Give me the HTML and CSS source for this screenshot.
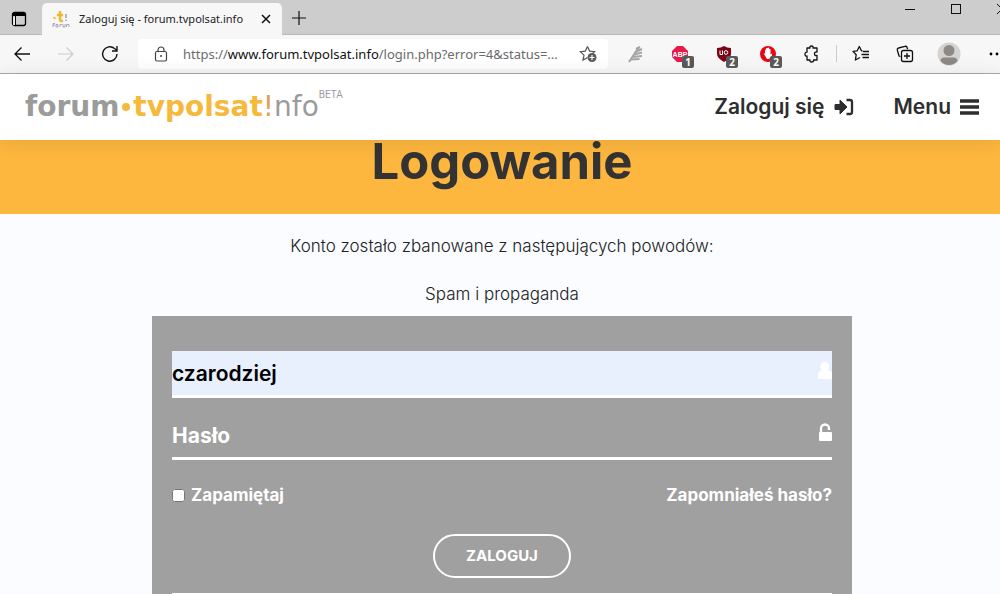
FILE: index.html
```html
<!DOCTYPE html>
<html lang="pl">
<head>
<meta charset="utf-8">
<title>Zaloguj się - forum.tvpolsat.info</title>
<link rel="stylesheet" href="styles.css">
</head>
<body>
<div class="tabstrip">
  <button class="tab-actions" aria-label="Karty"><svg width="16" height="16" viewBox="0 0 16 16"><rect x="1.500" y="1.500" width="13" height="13" rx="2" fill="none" stroke="#000" stroke-width="1.300"/><path d="M1 2h14v3H1z" fill="#000"/><path d="M4.500 4v10" stroke="#000"/><path d="M2.200 6h1.800v8H2.200z" fill="#f2f2f2"/></svg></button>
  <div class="tab">
    <svg class="favicon" width="18" height="18" viewBox="0 0 18 18"><circle cx="2.500" cy="8" r="1.300" fill="#f2c14a"/><path d="M8 1v8.500q0 2 3 1.500M5 5h6" fill="none" stroke="#f5b62c" stroke-width="2.500"/><path d="M14 4v4M14 9.500v1.500" stroke="#a2a0aa" stroke-width="1.500"/><path d="M1 17v-3.500h2M1 15h2M4 14.500h2V17H4zM8 17v-2.500h2M11 14v3h2v-3M14.500 17v-2.500H17V17" fill="none" stroke="#a9a7b6"/></svg>
    <span class="tab-title">Zaloguj się - forum.tvpolsat.info</span>
    <button class="tab-close" aria-label="Zamknij kartę"><svg width="10" height="10" viewBox="0 0 10 10"><path d="M1 1l8 8M9 1L1 9" stroke="#111" stroke-width="1.500"/></svg></button>
  </div>
  <button class="new-tab" aria-label="Nowa karta"><svg width="16" height="16" viewBox="0 0 16 16"><path d="M8 1v14M1 8h14" stroke="#111" stroke-width="1.200"/></svg></button>
  <div class="window-controls">
    <button aria-label="Minimalizuj"><svg width="12" height="12" viewBox="0 0 12 12"><path d="M1 6.500h10" stroke="#111"/></svg></button>
    <button aria-label="Maksymalizuj"><svg width="12" height="12" viewBox="0 0 12 12"><rect x="1.500" y="1.500" width="9" height="9" fill="none" stroke="#111"/></svg></button>
    <button class="window-close" aria-label="Zamknij"><svg width="12" height="12" viewBox="0 0 12 12"><path d="M1 1l10 10M11 1L1 11" stroke="#111"/></svg></button>
  </div>
</div>
<div class="toolbar">
  <button class="nav-button" aria-label="Wstecz"><svg width="18" height="16" viewBox="0 0 18 16"><path d="M17 8H2M8.500 1.500L2 8l6.500 6.500" fill="none" stroke="#111" stroke-width="1.300"/></svg></button>
  <button class="nav-button" aria-label="Dalej"><svg width="18" height="16" viewBox="0 0 18 16"><path d="M1 8h15M9.500 1.500L16 8l-6.500 6.500" fill="none" stroke="#ccc" stroke-width="1.200"/></svg></button>
  <button class="nav-button" aria-label="Odśwież"><svg width="18" height="18" viewBox="0 0 18 18"><path d="M16 9a7.200 7.200 0 1 1-2.500-5.500L15.500 5M16 1v5h-5" fill="none" stroke="#111" stroke-width="1.400"/></svg></button>
  <div class="address">
    <svg width="14" height="16" viewBox="0 0 14 16"><rect x="1.500" y="5.500" width="11" height="9.500" rx="1.500" fill="none" stroke="#444" stroke-width="1.200"/><path d="M4 5.500V4a3 3 0 0 1 6 0v1.500" fill="none" stroke="#444" stroke-width="1.200"/><circle cx="7" cy="10" r="1" fill="#444"/></svg>
    <span class="url">https://<b>www.forum.tvpolsat.info</b>/login.php?error=4&amp;status=...</span>
    <button class="favorite" aria-label="Dodaj do ulubionych"><svg width="18" height="18" viewBox="0 0 18 18"><path d="M8.500 1.500l2.100 4.600 5 .6-3.700 3.400M8.500 1.500L6.300 6.100l-5 .6 3.700 3.400-1 5 4.300-2.400" fill="none" stroke="#555" stroke-width="1.200"/><circle cx="13" cy="12.500" r="4.500" fill="#5b5b5b"/><path d="M13 10v5M10.500 12.500h5" stroke="#fff" stroke-width="1.200"/></svg></button>
  </div>
  <div class="tools">
    <button class="tool" aria-label="Rozszerzenie"><svg width="18" height="18" viewBox="0 0 18 18"><path d="M2 17L12 2" stroke="#a5a5a5" stroke-width="2"/><path d="M9 4l4-2M8 7l7-3M7 9.500l8-2M5 12l10-1M3.500 14.500l9-.5" stroke="#a5a5a5" stroke-width="2"/></svg></button>
    <button class="tool" aria-label="AdBlock Plus"><svg width="16" height="16" viewBox="0 0 16 16"><path d="M5 0h6l5 5v6l-5 5H5l-5-5V5z" fill="#e41b4b"/><text x="8" y="11" class="abp-text">ABP</text></svg><span class="badge">1</span></button>
    <button class="tool" aria-label="uBlock"><svg width="16" height="16" viewBox="0 0 16 16"><path d="M8 0q3 2 7 2v6q0 4-7 8-7-4-7-8V2q4 0 7-2z" fill="#7b0615"/><path d="M4 4.500v4h2.500v-4" fill="none" stroke="#fff"/><circle cx="10" cy="6.500" r="1.800" fill="none" stroke="#fff"/></svg><span class="badge">2</span></button>
    <button class="tool" aria-label="Blokada reklam"><svg width="18" height="18" viewBox="0 0 18 18"><circle cx="9" cy="9" r="8" fill="#e90612"/><path d="M5 9l1-1V5q1-1 1 0V3.500q1-1 1.500 0V3q1-1 1.500 0v1q1-.5 1.500.5v5l1.500-1v2l-3 3.500H8z" fill="#fff"/></svg><span class="badge">2</span></button>
    <button class="tool" aria-label="Rozszerzenia"><svg width="16" height="18" viewBox="0 0 16 18"><path d="M3 3h3q-.5-2 1.500-2T9 3h4v4q-2.500-.5-2.500 1.800T13 10.500V15H9.500q.3 2-1.800 2T6 15H3v-4q-2 .3-2-1.800T3 7.200z" fill="none" stroke="#111" stroke-width="1.300" stroke-linejoin="round"/></svg></button>
    <span class="separator"></span>
    <button class="tool" aria-label="Ulubione"><svg width="18" height="18" viewBox="0 0 18 18"><path d="M10.500 6L9.500 5.800 7.300 1.500 5.200 5.800l-4.200.6 3.200 3.300-.8 5.300L8 12.500M11 6.500h6M9.500 9.500H17M10.500 12.500H17" fill="none" stroke="#111" stroke-width="1.300" stroke-linejoin="round"/></svg></button>
    <button class="tool" aria-label="Kolekcje"><svg width="18" height="18" viewBox="0 0 18 18"><path d="M4.500 11.500L3 11 1.300 5q-.3-1.700 1.200-2l6.500-1.700q1.500-.3 2 1l.6 2" fill="none" stroke="#111" stroke-width="1.300"/><rect x="5.500" y="5.500" width="11" height="11" rx="2" fill="none" stroke="#111" stroke-width="1.300"/><path d="M11 8v6M8 11h6" stroke="#111" stroke-width="1.300"/></svg></button>
    <button class="tool" aria-label="Profil"><svg width="24" height="24" viewBox="0 0 24 24"><circle cx="12" cy="12" r="11.500" fill="#d5d3d1"/><circle cx="12" cy="8.500" r="5.500" fill="#8f8986"/><path d="M3.500 19q0-3.500 4-3.500h9q4 0 4 3.500-3.500 4-8.500 4t-8.500-4z" fill="#8f8986"/></svg></button>
    <button class="more" aria-label="Więcej"><svg width="16" height="4" viewBox="0 0 16 4"><circle cx="2" cy="2" r="1.400"/><circle cx="8" cy="2" r="1.400"/><circle cx="14" cy="2" r="1.400"/></svg></button>
  </div>
</div>
<header class="site-header">
  <a class="logo" href="#"><span class="logo-forum">forum</span><span class="logo-dot"></span><span class="logo-name">tvpolsat</span><span class="logo-info"><span class="logo-mark">!</span>nfo</span><span class="logo-beta">BETA</span></a>
  <nav class="site-nav">
    <a href="#">Zaloguj się <svg width="20" height="18" viewBox="0 0 20 18"><path d="M1 6.500h5V2l7 7-7 7v-4.500H1z" fill="#2e2e2e" stroke="#2e2e2e" stroke-linejoin="round"/><path d="M12.500 2H16q2 0 2 2v10q0 2-2 2h-3.500" fill="none" stroke="#2e2e2e" stroke-width="2.300"/></svg></a>
    <a href="#">Menu <svg width="19" height="16" viewBox="0 0 19 16"><path d="M0 2h19M0 8h19M0 14h19" stroke="#2e2e2e" stroke-width="3.600"/></svg></a>
  </nav>
</header>
<div class="banner"><h1>Logowanie</h1></div>
<main class="content">
  <p>Konto zostało zbanowane z następujących powodów:</p>
  <p>Spam i propaganda</p>
  <form class="login">
    <div class="field filled">
      <input type="text" value="czarodziej" aria-label="Nazwa użytkownika">
      <svg class="field-icon" width="14" height="19" viewBox="0 0 14 19"><circle cx="7" cy="5.500" r="4.500" fill="#fff"/><path d="M0 18v-3q0-5 4-6h6q4 1 4 4v5z" fill="#fff"/></svg>
    </div>
    <div class="field">
      <input type="password" placeholder="Hasło" aria-label="Hasło">
      <svg class="field-icon" width="14" height="19" viewBox="0 0 14 19"><path d="M3 10V5.500a4 4 0 0 1 8 0V7" fill="none" stroke="#fff" stroke-width="2.300"/><rect x="1" y="9" width="13" height="9" rx="1" fill="#fff"/></svg>
    </div>
    <div class="options">
      <label><input type="checkbox">Zapamiętaj</label>
      <a href="#">Zapomniałeś hasło?</a>
    </div>
    <button class="submit" type="button">ZALOGUJ</button>
    <hr>
  </form>
</main>
</body>
</html>
```
FILE: styles.css
```css
* { box-sizing: border-box; }
body {
  margin: 0;
  min-height: 100vh;
  overflow: hidden;
  background: #fafcff;
  color: #212121;
  font-family: Inter, "Open Sans", sans-serif;
}
button { border: 0; padding: 0; background: none; }
svg { display: block; flex: none; }
a { color: inherit; text-decoration: none; }

.tabstrip {
  display: flex;
  align-items: flex-start;
  height: 35px;
  background: #cdcdcd;
  border-bottom: 1px solid #b9b9b9;
}
.tab-actions { margin: 11px 12px 0 11px; }
.tab {
  display: flex;
  align-items: center;
  width: 240px;
  height: 32px;
  margin: 3px 0 0 3px;
  padding: 0 11px 0 10px;
  border-radius: 5px 5px 0 0;
  background: #f7f7f7;
}
.tab-title {
  flex: 1;
  margin-left: 9px;
  color: #222;
  font: 11px/16px "Noto Sans", sans-serif;
  white-space: nowrap;
}
.new-tab { margin: 10px 0 0 9px; }
.window-controls {
  display: flex;
  gap: 34px;
  margin: 3px 0 0 auto;
}
.window-close { width: 4px; overflow: hidden; }

.toolbar {
  display: flex;
  align-items: center;
  height: 39px;
  padding-bottom: 1px;
  background: #f7f7f7;
  border-bottom: 1px solid #a9a9a9;
}
.nav-button {
  display: flex;
  justify-content: center;
  width: 44px;
}
.address {
  display: flex;
  flex: 1;
  align-items: center;
  min-width: 0;
  height: 30px;
  margin: 0 6px;
  padding: 0 11px 0 16px;
  border-radius: 4px;
  background: #fff;
}
.url {
  flex: 1;
  overflow: hidden;
  margin-left: 15px;
  color: #6b6b6b;
  font: 13px/20px "Noto Sans", sans-serif;
  white-space: nowrap;
}
.url b { color: #111; font-weight: 400; }
.tools { display: flex; align-items: center; }
.tool {
  position: relative;
  display: flex;
  align-items: center;
  justify-content: center;
  width: 44px;
  height: 30px;
}
.badge {
  position: absolute;
  right: 8px;
  bottom: 1px;
  width: 12px;
  height: 12px;
  border-radius: 2px;
  background: #5a5a5a;
  color: #fff;
  font: bold 10px/12px "Open Sans", sans-serif;
  text-align: center;
}
.abp-text {
  fill: #fff;
  font: bold 7px "Liberation Sans", sans-serif;
  text-anchor: middle;
}
.separator { width: 1px; height: 17px; margin: 0 2px; background: #ccc; }
.more { width: 29px; padding-left: 18px; overflow: hidden; }

.site-header {
  position: relative;
  display: flex;
  align-items: center;
  justify-content: space-between;
  height: 66px;
  padding: 0 21px 0 25px;
  background: #fff;
  box-shadow: 0 2px 20px rgba(0, 0, 0, 0.1);
}
.logo {
  display: flex;
  align-items: center;
  height: 40px;
  color: #9b9b9b;
  font: 28px/32px "DejaVu Sans", sans-serif;
}
.logo-forum, .logo-name { font-weight: 700; }
.logo-name { color: #f6b93c; }
.logo-mark { color: #dba25b; }
.logo-dot {
  width: 8px;
  height: 8px;
  margin: 0 3px;
  border-radius: 50%;
  background: #f6b93c;
}
.logo-beta {
  align-self: flex-start;
  font: 10px/16px Roboto, sans-serif;
}
.site-nav {
  display: flex;
  gap: 40px;
  font-size: 21px;
  font-weight: 600;
  line-height: 24px;
}
.site-nav a { display: flex; align-items: center; gap: 9px; color: #2e2e2e; }

.banner {
  padding: 0 0 30px 4px;
  background: #fdb73e;
  text-align: center;
}
h1 {
  margin: 0;
  color: #333;
  font-size: 49px;
  font-weight: 700;
  line-height: 44px;
}
.content {
  padding: 20px 0 0 4px;
  font-size: 17px;
  line-height: 24px;
  text-align: center;
}
.content p { margin: 0 0 24px; font-weight: 300; }
.content p + p { margin-bottom: 10px; }
.login {
  max-width: 700px;
  margin: 0 auto;
  padding: 35px 20px 0;
  background: #a0a0a0;
  color: #fff;
  font-weight: 700;
}
.field {
  position: relative;
  height: 47px;
  margin-bottom: 15px;
  border-bottom: 3px solid #fff;
}
.field input {
  display: block;
  width: 100%;
  height: 44px;
  padding: 0;
  border: 0;
  outline: 0;
  background: transparent;
  color: #000;
  font: 600 21px/24px Inter, sans-serif;
}
.field input::placeholder { color: #fff; font-weight: 700; opacity: 1; }
.filled { background: #e8f0fe; }
.field-icon { position: absolute; top: 10px; right: 0; }
.options {
  display: flex;
  justify-content: space-between;
  margin-top: 23px;
}
.options label { display: flex; align-items: center; gap: 6px; }
.options input { width: 13px; height: 13px; margin: 0; }
.submit {
  display: block;
  height: 44px;
  margin: 27px auto 15px;
  padding: 0 31px;
  border: 2px solid #fff;
  border-radius: 22px;
  color: #fff;
  font: 700 15px/24px Inter, sans-serif;
}
hr { height: 3px; margin: 0; border: 0; background: #fff; }
```
